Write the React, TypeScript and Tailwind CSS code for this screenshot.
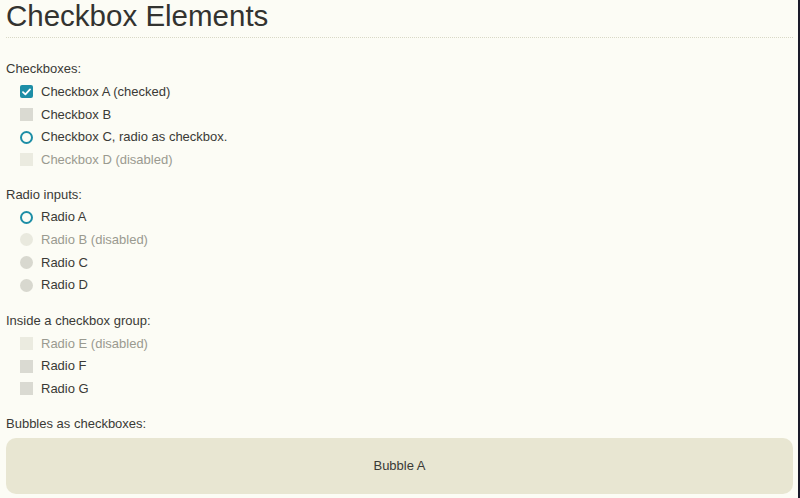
import React from "react";

type Kind = "checked" | "box" | "boxLight" | "ring" | "dot" | "dotLight";

function Mark({ kind }: { kind: Kind }) {
  if (kind === "checked")
    return (
      <span className="w-[13px] h-[13px] rounded-[2px] bg-[#1d8ea6] flex items-center justify-center">
        <svg width="9" height="8" viewBox="0 0 9 8">
          <path d="M1 4.2 L3.4 6.4 L8 1.4" stroke="#fff" strokeWidth="1.8" fill="none" strokeLinecap="round" strokeLinejoin="round" />
        </svg>
      </span>
    );
  if (kind === "ring")
    return <span className="w-[13px] h-[13px] rounded-full border-[2.5px] border-[#1d8ea6] box-border" />;
  if (kind === "box") return <span className="w-[13px] h-[13px] bg-[#dadad2]" />;
  if (kind === "boxLight") return <span className="w-[13px] h-[13px] bg-[#ebebe0]" />;
  if (kind === "dot") return <span className="w-[13px] h-[13px] rounded-full bg-[#d8d8cf]" />;
  return <span className="w-[13px] h-[13px] rounded-full bg-[#e9e9de]" />;
}

function Item({ kind, label, disabled }: { kind: Kind; label: string; disabled?: boolean }) {
  return (
    <div className="h-[22.7px] flex items-center pl-[14px] gap-[8px]">
      <Mark kind={kind} />
      <span className={disabled ? "text-[#9a9a90]" : "text-[#3a3a36]"}>{label}</span>
    </div>
  );
}

function Label({ children }: { children: React.ReactNode }) {
  return <div className="h-[22.7px] flex items-center text-[#3a3a36]">{children}</div>;
}

export default function App() {
  return (
    <div
      className="w-[800px] h-[498px] overflow-hidden bg-[#fcfcf5] border-r-2 border-[#1a1a2a] box-border text-[13px]"
      style={{ fontFamily: '"Liberation Sans", Arial, sans-serif' }}
    >
      <div className="px-[6px] pr-[5px]">
        <div className="h-[38px] border-b border-dotted border-[#d8d8c6] flex items-center">
          <h1 className="text-[29.5px] leading-none text-[#333330] -mt-[5px]">Checkbox Elements</h1>
        </div>
        <div className="pt-[19.6px]">
          <div className="mb-[12px]">
            <Label>Checkboxes:</Label>
            <Item kind="checked" label="Checkbox A (checked)" />
            <Item kind="box" label="Checkbox B" />
            <Item kind="ring" label="Checkbox C, radio as checkbox." />
            <Item kind="boxLight" label="Checkbox D (disabled)" disabled />
          </div>
          <div className="mb-[13px]">
            <Label>Radio inputs:</Label>
            <Item kind="ring" label="Radio A" />
            <Item kind="dotLight" label="Radio B (disabled)" disabled />
            <Item kind="dot" label="Radio C" />
            <Item kind="dot" label="Radio D" />
          </div>
          <div className="mb-[12px]">
            <Label>Inside a checkbox group:</Label>
            <Item kind="boxLight" label="Radio E (disabled)" disabled />
            <Item kind="box" label="Radio F" />
            <Item kind="box" label="Radio G" />
          </div>
          <div>
            <Label>Bubbles as checkboxes:</Label>
            <div className="mt-[3px] h-[56px] rounded-[10px] bg-[#e8e6d2] flex items-center justify-center text-[#3a3a36]">
              Bubble A
            </div>
          </div>
        </div>
      </div>
    </div>
  );
}
